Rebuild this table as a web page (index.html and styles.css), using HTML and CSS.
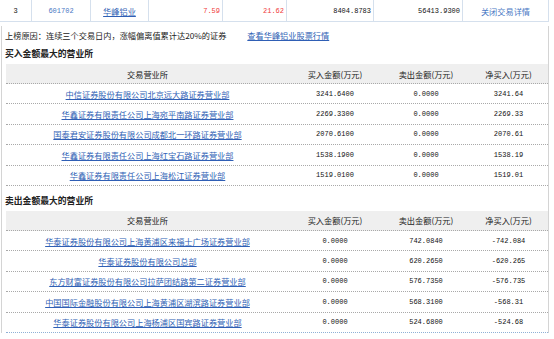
FILE: index.html
```html
<!DOCTYPE html>
<html lang="zh">
<head>
    <meta charset="UTF-8">
    <title>龙虎榜</title>
    <link rel="stylesheet" href="styles.css">
</head>
<body>
    <table class="top">
        <tr>
            <td class="c">3</td>
            <td class="c code">601702</td>
            <td class="c"><a href="#">华峰铝业</a></td>
            <td class="r red">7.59</td>
            <td class="r red">21.62</td>
            <td class="r">8404.8783</td>
            <td class="r">56413.9300</td>
            <td class="c close">关闭交易详情</td>
        </tr>
    </table>

    <div class="detail">
        <div class="reason">
            <span>上榜原因：连续三个交易日内，涨幅偏离值累计达20%的证券</span>
            <a href="#" class="quote">查看华峰铝业股票行情</a>
        </div>

        <h3>买入金额最大的营业所</h3>
        <div class="grid">
            <div class="row head"><span>交易营业所</span><span>买入金额(万元)</span><span>卖出金额(万元)</span><span>净买入(万元)</span></div>
            <div class="row"><a href="#">中信证券股份有限公司北京远大路证券营业部</a><span>3241.6400</span><span>0.0000</span><span>3241.64</span></div>
            <div class="row"><a href="#">华鑫证券有限责任公司上海宛平南路证券营业部</a><span>2269.3300</span><span>0.0000</span><span>2269.33</span></div>
            <div class="row"><a href="#">国泰君安证券股份有限公司成都北一环路证券营业部</a><span>2070.6100</span><span>0.0000</span><span>2070.61</span></div>
            <div class="row"><a href="#">华鑫证券有限责任公司上海红宝石路证券营业部</a><span>1538.1900</span><span>0.0000</span><span>1538.19</span></div>
            <div class="row"><a href="#">华鑫证券有限责任公司上海松江证券营业部</a><span>1519.0100</span><span>0.0000</span><span>1519.01</span></div>
        </div>

        <h3 class="sell">卖出金额最大的营业所</h3>
        <div class="grid">
            <div class="row head"><span>交易营业所</span><span>买入金额(万元)</span><span>卖出金额(万元)</span><span>净买入(万元)</span></div>
            <div class="row"><a href="#">华泰证券股份有限公司上海黄浦区来福士广场证券营业部</a><span>0.0000</span><span>742.0840</span><span>-742.084</span></div>
            <div class="row"><a href="#">华泰证券股份有限公司总部</a><span>0.0000</span><span>620.2650</span><span>-620.265</span></div>
            <div class="row"><a href="#">东方财富证券股份有限公司拉萨团结路第二证券营业部</a><span>0.0000</span><span>576.7350</span><span>-576.735</span></div>
            <div class="row"><a href="#">中国国际金融股份有限公司上海黄浦区湖滨路证券营业部</a><span>0.0000</span><span>568.3100</span><span>-568.31</span></div>
            <div class="row last"><a href="#">华泰证券股份有限公司上海杨浦区国宾路证券营业部</a><span>0.0000</span><span>524.6800</span><span>-524.68</span></div>
        </div>
    </div>
</body>
</html>
```

FILE: styles.css
```css
body{
    margin: 0;
    font-family: "Noto Sans CJK SC", sans-serif;
    font-size: 8.2px;
    color: #222;
    background: #fff;
}

a{
    color: #2f5fb5;
}

.top{
    width: 549px;
    border-collapse: collapse;
    table-layout: fixed;
}
.top td{
    height: 21px;
    padding: 0 2px;
    border: 1px solid #d5e0ed;
    border-top: none;
    font-family: "Liberation Mono", monospace;
    font-size: 7px;
    color: #111;
}
.top td:nth-child(1){ width: 27px; }
.top td:nth-child(2){ width: 54px; }
.top td:nth-child(3){ width: 53px; }
.top td:nth-child(4){ width: 69px; }
.top td:nth-child(5){ width: 59px; }
.top td:nth-child(6){ width: 82px; }
.top td:nth-child(7){ width: 84px; }
.top td:first-child{ border-left: none; }
.top .c{ text-align: center; }
.top .r{ text-align: right; }
.top .red{ color: #f03a3a; }
.top .code{ color: #4a78c4; }
.top td a,
.top .close{
    font-family: "Noto Sans CJK SC", sans-serif;
    font-size: 8.2px;
}
.top .close{
    color: #4a78c4;
}

.detail{
    width: 548px;
    margin-left: 1px;
    border-left: 1px solid #d4d4d4;
    border-right: 1px solid #d4d4d4;
    padding-left: 4px;
    box-sizing: border-box;
}

.reason{
    display: flex;
    gap: 21px;
    margin: 4px 0 0 -1px;
    line-height: 18px;
}

h3{
    margin: 3px 0 3px -1px;
    font-size: 8.8px;
    line-height: 14px;
}
h3.sell{
    margin-top: 8px;
}

.row{
    display: grid;
    grid-template-columns: 283px 92px 90px 75px;
    height: 20.4px;
    align-items: center;
    text-align: center;
    border-bottom: 1px dotted #a9a9a9;
    box-sizing: border-box;
}
.row span{
    font-family: "Liberation Mono", monospace;
    font-size: 7px;
    color: #111;
}
.row.head{
    height: 20px;
    background: #efefef;
}
.row.head span{
    font-family: "Noto Sans CJK SC", sans-serif;
    font-size: 8.2px;
    color: #222;
}
.row.last{
    border-bottom-color: #8fb0d6;
}
```
